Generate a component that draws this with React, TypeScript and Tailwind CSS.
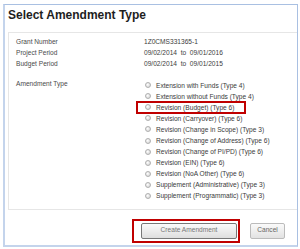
import React from "react";

const options = [
  "Extension with Funds (Type 4)",
  "Extension without Funds (Type 4)",
  "Revision (Budget) (Type 6)",
  "Revision (Carryover) (Type 6)",
  "Revision (Change in Scope) (Type 3)",
  "Revision (Change of Address) (Type 6)",
  "Revision (Change of PI/PD) (Type 6)",
  "Revision (EIN) (Type 6)",
  "Revision (NoA Other) (Type 6)",
  "Supplement (Administrative) (Type 3)",
  "Supplement (Programmatic) (Type 3)",
];

function Radio() {
  return (
    <span className="block w-[6px] h-[6px] rounded-full border border-[#b0b0b0] bg-[radial-gradient(circle_at_40%_40%,#ffffff,#cccccc)] shrink-0" />
  );
}

export default function App() {
  return (
    <div className="w-[300px] h-[249px] bg-white pt-[4px] pl-[3px] font-['Liberation_Sans',Arial,sans-serif]">
      <div className="w-[295px] h-[243px] border-t border-r border-l-2 border-b-2 border-t-[#a9c0e2] border-r-[#a9c0e2] border-l-[#c4d4ec] border-b-[#c4d4ec] flex flex-col">
        <div className="pl-[3px] pt-[3px] pb-[10px] text-[12px] leading-[14px] font-bold text-[#1e1e1e]">
          Select Amendment Type
        </div>
        <div className="ml-[3px] border-t border-l border-b border-[#e6e6e6] pt-[3px] pb-[7px] pl-[7px] text-[6.6px] leading-[11px] text-[#4a4a4a]">
          <div className="grid grid-cols-[128px_1fr]">
            <div>Grant Number</div>
            <div className="text-[#3c3c3c]">1Z0CMS331365-1</div>
            <div>Project Period</div>
            <div className="text-[#3c3c3c] whitespace-pre">09/02/2014  to  09/01/2016</div>
            <div>Budget Period</div>
            <div className="text-[#3c3c3c] whitespace-pre">09/02/2014  to  09/01/2015</div>
          </div>
          <div className="grid grid-cols-[129px_1fr] mt-[9px]">
            <div>Amendment Type</div>
            <div className="flex flex-col pt-[1.5px]">
              {options.map((o, i) => (
                <div key={o} className="relative flex items-center gap-[5px] h-[11.1px] text-[#3a3a3a]">
                  <Radio />
                  <span>{o}</span>
                  {i === 2 && (
                    <span className="absolute -left-[9px] -top-[1px] -bottom-[1px] w-[110px] border-2 border-[#c00000]" />
                  )}
                </div>
              ))}
            </div>
          </div>
        </div>
        <div className="flex justify-end items-start pr-[12px] pt-[13px] gap-[13px] text-[6.6px] leading-none">
          <div className="relative flex">
            <button className="block w-[96px] h-[16px] rounded-[2px] border border-[#777] bg-[linear-gradient(#fafafa,#dedede)] text-[6.6px] text-[#777] leading-none">
              Create Amendment
            </button>
            <span className="absolute -left-[9px] -top-[4px] -right-[3px] -bottom-[4px] border-2 border-[#c00000]" />
          </div>
          <button className="block w-[35px] h-[16px] rounded-[2px] border border-[#bbb] bg-[linear-gradient(#fafafa,#e2e2e2)] text-[6.6px] text-[#666] leading-none">
            Cancel
          </button>
        </div>
      </div>
    </div>
  );
}
